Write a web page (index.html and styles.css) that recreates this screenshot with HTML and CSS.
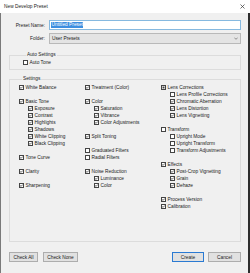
FILE: index.html
```html
<!DOCTYPE html>
<html lang="en">
<head>
  <meta charset="UTF-8">
  <title>New Develop Preset</title>
  <link rel="stylesheet" href="styles.css">
</head>
<body>
  <div class="window">
    <div class="titlebar">
      <span>New Develop Preset</span>
      <svg class="close" width="5" height="5" viewBox="0 0 5 5"><path d="M0.5 0.5 L4.5 4.5 M4.5 0.5 L0.5 4.5" stroke="#333" stroke-width="0.7"/></svg>
    </div>

    <div class="content">
      <div class="field-row">
        <div class="field-label">Preset Name:</div>
        <div class="text-input"><span class="selected">Untitled Preset</span></div>
      </div>
      <div class="field-row">
        <div class="field-label">Folder:</div>
        <div class="select">
          <span>User Presets</span>
          <svg width="4" height="3" viewBox="0 0 4 3"><path d="M0.3 0.6 L2 2.3 L3.7 0.6" fill="none" stroke="#555" stroke-width="0.6"/></svg>
        </div>
      </div>

      <fieldset class="group auto-group">
        <legend>Auto Settings</legend>
        <div class="row"><span class="cb"></span>Auto Tone</div>
      </fieldset>

      <fieldset class="group settings-group">
        <legend>Settings</legend>
        <div class="columns">
          <div class="column">
            <div class="block">
              <div class="row"><span class="cb on"></span>White Balance</div>
            </div>
            <div class="block">
              <div class="row"><span class="cb on"></span>Basic Tone</div>
              <div class="row sub"><span class="cb on"></span>Exposure</div>
              <div class="row sub"><span class="cb on"></span>Contrast</div>
              <div class="row sub"><span class="cb on"></span>Highlights</div>
              <div class="row sub"><span class="cb on"></span>Shadows</div>
              <div class="row sub"><span class="cb on"></span>White Clipping</div>
              <div class="row sub"><span class="cb on"></span>Black Clipping</div>
            </div>
            <div class="block">
              <div class="row"><span class="cb on"></span>Tone Curve</div>
            </div>
            <div class="block">
              <div class="row"><span class="cb on"></span>Clarity</div>
            </div>
            <div class="block">
              <div class="row"><span class="cb on"></span>Sharpening</div>
            </div>
          </div>

          <div class="column">
            <div class="block">
              <div class="row"><span class="cb on"></span>Treatment (Color)</div>
            </div>
            <div class="block">
              <div class="row"><span class="cb on"></span>Color</div>
              <div class="row sub"><span class="cb on"></span>Saturation</div>
              <div class="row sub"><span class="cb on"></span>Vibrance</div>
              <div class="row sub"><span class="cb on"></span>Color Adjustments</div>
            </div>
            <div class="block">
              <div class="row"><span class="cb on"></span>Split Toning</div>
            </div>
            <div class="block">
              <div class="row"><span class="cb"></span>Graduated Filters</div>
              <div class="row"><span class="cb"></span>Radial Filters</div>
            </div>
            <div class="block">
              <div class="row"><span class="cb on"></span>Noise Reduction</div>
              <div class="row sub"><span class="cb on"></span>Luminance</div>
              <div class="row sub"><span class="cb on"></span>Color</div>
            </div>
          </div>

          <div class="column">
            <div class="block">
              <div class="row"><span class="cb mixed"></span>Lens Corrections</div>
              <div class="row sub"><span class="cb"></span>Lens Profile Corrections</div>
              <div class="row sub"><span class="cb on"></span>Chromatic Aberration</div>
              <div class="row sub"><span class="cb on"></span>Lens Distortion</div>
              <div class="row sub"><span class="cb on"></span>Lens Vignetting</div>
            </div>
            <div class="block">
              <div class="row"><span class="cb"></span>Transform</div>
              <div class="row sub"><span class="cb"></span>Upright Mode</div>
              <div class="row sub"><span class="cb"></span>Upright Transform</div>
              <div class="row sub"><span class="cb"></span>Transform Adjustments</div>
            </div>
            <div class="block">
              <div class="row"><span class="cb on"></span>Effects</div>
              <div class="row sub"><span class="cb on"></span>Post-Crop Vignetting</div>
              <div class="row sub"><span class="cb on"></span>Grain</div>
              <div class="row sub"><span class="cb on"></span>Dehaze</div>
            </div>
            <div class="block">
              <div class="row"><span class="cb on"></span>Process Version</div>
              <div class="row"><span class="cb on"></span>Calibration</div>
            </div>
          </div>
        </div>
      </fieldset>

      <div class="buttons">
        <div class="button check-all">Check All</div>
        <div class="button check-none">Check None</div>
        <div class="spacer"></div>
        <div class="button default create">Create</div>
        <div class="button cancel">Cancel</div>
      </div>
    </div>
  </div>
</body>
</html>
```

FILE: styles.css
```css
body {
  margin: 0;
  padding: 0;
  font-family: "Liberation Sans", Arial, sans-serif;
  font-size: 4.8px;
  color: #1a1a1a;
  background-color: #f0f0f0;
}

.window {
  width: 250px;
  height: 273px;
  display: flex;
  flex-direction: column;
}

.titlebar {
  height: 13px;
  background-color: #fff;
  display: flex;
  align-items: center;
  justify-content: space-between;
  padding: 0 5px 0 4px;
  color: #222;
}

.close {
  display: block;
}

.content {
  flex: 1;
  background-color: #f0f0f0;
  border-left: 1px solid #7a7a7a;
  border-right: 2px solid #2e2e2e;
  padding: 7px 7px 0 8px;
}

.field-row {
  display: flex;
  align-items: center;
  margin-bottom: 3px;
}

.field-label {
  width: 36px;
  text-align: right;
  padding-right: 4px;
}

.text-input {
  flex: 1;
  height: 8px;
  border: 1px solid #86b9e0;
  background-color: #fff;
  display: flex;
  align-items: center;
  padding-left: 1px;
}

.selected {
  background-color: #3d8ee0;
  color: #fff;
  padding: 0 0.5px;
  line-height: 6px;
}

.select {
  flex: 1;
  height: 9px;
  border: 1px solid #b9b9b9;
  background-color: #e4e4e4;
  display: flex;
  align-items: center;
  justify-content: space-between;
  padding: 0 2px 0 2px;
}

.select svg {
  display: block;
}

.group {
  border: 1px solid #dcdcdc;
  margin: 0;
  padding: 0;
  min-width: 0;
}

.group legend {
  margin-left: 3px;
  padding: 0 1px;
  line-height: 6px;
}

.auto-group {
  margin-top: 8px;
  padding: 1px 0 3px 13px;
}

.settings-group {
  margin-top: 6px;
  height: 166px;
  box-sizing: border-box;
  padding: 2px 0 0 9px;
}

.columns {
  display: grid;
  grid-template-columns: 66px 76px 1fr;
}

.column {
  display: flex;
  flex-direction: column;
  gap: 7px;
}

.row {
  display: flex;
  align-items: center;
  height: 7px;
  gap: 1.5px;
  white-space: nowrap;
}

.row.sub {
  padding-left: 9px;
}

.cb {
  width: 5px;
  height: 5px;
  box-sizing: border-box;
  border: 1px solid #444;
  background-color: #fff;
  flex-shrink: 0;
}

.cb.on {
  background-image: url("data:image/svg+xml,%3Csvg xmlns='http://www.w3.org/2000/svg' viewBox='0 0 3 3'%3E%3Cpath d='M0.2 1.5 L1.1 2.4 L2.8 0.5' fill='none' stroke='%23222' stroke-width='0.7'/%3E%3C/svg%3E");
  background-size: 3px 3px;
  background-repeat: no-repeat;
}

.cb.mixed {
  background-color: #444;
  box-shadow: inset 0 0 0 0.5px #fff;
}

.buttons {
  display: flex;
  margin-top: 10px;
  gap: 5px;
}

.spacer {
  flex: 1;
}

.button {
  height: 10px;
  box-sizing: border-box;
  border: 1px solid #adadad;
  background-color: #e1e1e1;
  display: flex;
  align-items: center;
  justify-content: center;
}

.button.default {
  border-color: #2a7ad2;
}

.check-all {
  width: 29px;
}

.check-none {
  width: 35px;
}

.create {
  width: 32px;
}

.cancel {
  width: 33px;
  margin-left: -1px;
}
```
